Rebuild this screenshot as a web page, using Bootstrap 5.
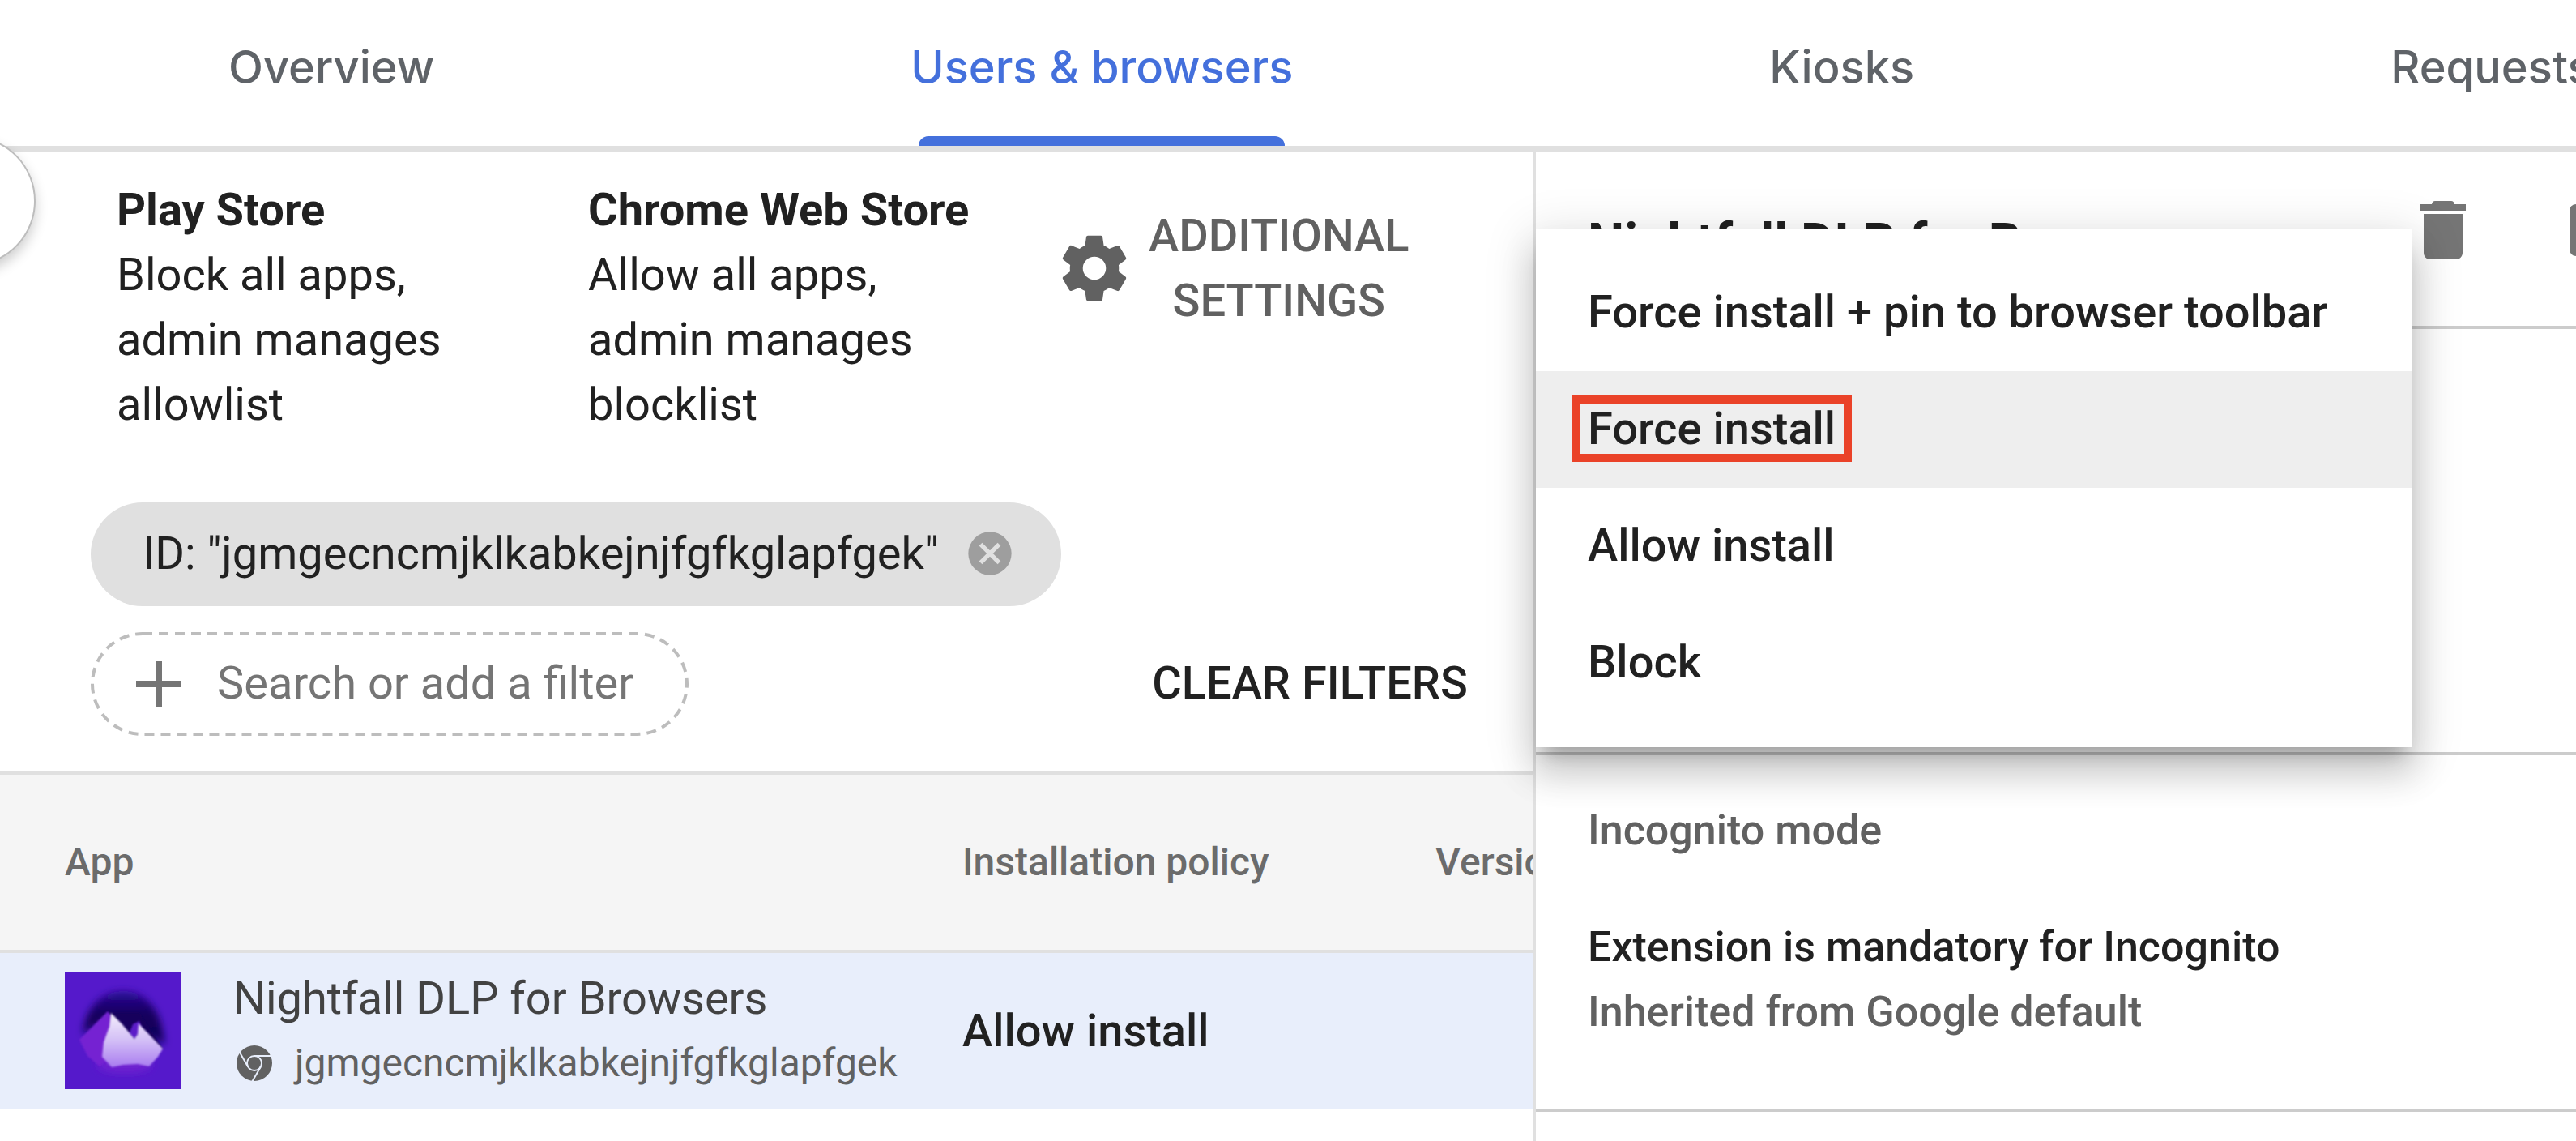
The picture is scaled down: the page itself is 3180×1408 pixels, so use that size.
<!DOCTYPE html>
<html lang="en">
<head>
<meta charset="utf-8">
<meta name="viewport" content="width=device-width, initial-scale=1">
<title>Apps &amp; extensions</title>
<link href="https://cdn.jsdelivr.net/npm/bootstrap@5.3.0/dist/css/bootstrap.min.css" rel="stylesheet">
<style>
  body { font-family: Roboto, "Liberation Sans", sans-serif; font-size: 56px; line-height: 80px; color: #212121; background: #fff; }
  .fw-mid { font-weight: 500; }
  .ink-soft { color: #616161; }
  svg { display: block; flex: none; }

  .tab-bar { padding-left: 282px; gap: 588px; border-bottom: 8px solid #e0e0e0; font-family: Inter, Roboto, sans-serif; }
  .tab-bar .nav-link { padding: 43px 0 0; color: #5f6368; font-weight: 500; white-space: nowrap; }
  .tab-bar .nav-link::after { content: ""; display: block; height: 12px; margin: 45px 10px 0; border-radius: 12px 12px 0 0; }
  .tab-bar .nav-link.active { color: #4470dc; }
  .tab-bar .nav-link.active::after { background: #4470dc; }

  .drawer-toggle { left: -116px; top: 168px; width: 160px; height: 160px; border: 2px solid #bdbdbd; border-radius: 50%; background: #fff; box-shadow: 0 8px 16px rgba(0,0,0,.2); z-index: 3; }

  .panes { display: grid; grid-template-columns: minmax(0,1896fr) minmax(0,1284fr); }
  .list-pane { border-right: 4px solid #e0e0e0; padding-top: 31px; }

  .plain-btn { border: 0; padding: 0; background: none; color: #212121; }
  .policies { padding-left: 144px; gap: 92px; }
  .policy { width: 490px; }
  .settings-btn { gap: 24px; width: min-content; margin-top: 32px; color: #616161; font-weight: 500; }

  .filters { padding: 81px 80px 44px 112px; gap: 32px; }
  .chip { height: 128px; padding: 0 56px 2px 64px; gap: 31px; background: #e0e0e0; }
  .filter-box { height: 128px; width: 738px; padding: 0 56px; gap: 44px; }
  .filter-box .outline { inset: 0; width: 100%; height: 100%; }
  .filter-box .outline rect { width: calc(100% - 4px); height: calc(100% - 4px); }
  .filter-box input { border: 0; padding: 0 0 2px; outline: 0; background: none; min-width: 0; color: #212121; }
  .filter-box input::placeholder { color: #757575; opacity: 1; }
  .clear-btn { padding-bottom: 2px; }

  .app-table { table-layout: fixed; width: 2356px; border-collapse: separate; border-spacing: 0; margin: 0; color: #212121; }
  .app-table > :not(caption) > * > * { padding: 0; border: 0; vertical-align: middle; }
  .app-table > thead > tr > th { height: 224px; border-top: 4px solid #e0e0e0; border-bottom: 4px solid #e0e0e0; background: #f5f5f5; color: #6b6b6b; font-size: 48px; font-weight: 500; }
  .app-table > tbody > tr > td { height: 192px; background: #e8eefb; }
  .app-table > * > tr > :first-child { padding-left: 80px; }
  .col-app { width: 1188px; }
  .col-policy { width: 584px; }
  .app-cell { gap: 64px; }
  .app-name { color: #424242; }
  .app-id { gap: 28px; padding-left: 4px; font-size: 48px; color: #616161; }

  .detail-head { height: 218px; padding: 60px 0 0 64px; border-bottom: 4px solid #ccc; }
  .detail-title { font-size: 64px; line-height: 104px; }
  .detail-head .actions { gap: 128px; margin-right: -56px; }
  .detail-policy { height: 526px; border-bottom: 4px solid #ccc; }
  .detail-mode { padding: 53px 64px 79px; border-bottom: 4px solid #ccc; font-size: 52px; font-weight: 500; }
  .mode-heading { font-size: 52px; line-height: 80px; margin-bottom: 64px; }

  .policy-menu { top: 94px; left: 0; width: 1082px; padding: 32px 0; border: 0; border-radius: 0; background: #fff; z-index: 2; font-size: 56px;
    box-shadow: 0 20px 20px -12px rgba(0,0,0,.2), 0 32px 40px 4px rgba(0,0,0,.14), 0 12px 56px 8px rgba(0,0,0,.12); }
  .policy-menu .dropdown-item { height: 144px; padding: 0 64px 2px; color: #212121; font-weight: 500; }
  .policy-menu .dropdown-item.current { background: #eee; }
  .callout-box { inset: -1px -20px -1px -20px; border: 10px solid #ea4228; }
</style>
</head>
<body>
<div class="d-flex flex-column min-vh-100 position-relative overflow-hidden">
  <nav class="nav flex-nowrap tab-bar" aria-label="Sections">
    <a class="nav-link" href="#">Overview</a>
    <a class="nav-link active" href="#" aria-current="page">Users &amp; browsers</a>
    <a class="nav-link" href="#">Kiosks</a>
    <a class="nav-link" href="#">Requests</a>
  </nav>
  <button type="button" class="drawer-toggle position-absolute" aria-label="Toggle panel"></button>

  <main class="panes flex-grow-1">
    <section class="list-pane overflow-hidden">
      <div class="d-flex align-items-start policies">
        <div class="policy"><strong>Play Store</strong><br>Block all apps, admin manages allowlist</div>
        <div class="policy"><strong>Chrome Web Store</strong><br>Allow all apps, admin manages blocklist</div>
        <button type="button" class="plain-btn settings-btn d-flex align-items-center">
          <svg width="86" height="84" viewBox="2 2 20 20" fill="#616161" aria-hidden="true"><path d="M19.14 12.94c.04-.3.06-.61.06-.94 0-.32-.02-.64-.07-.94l2.03-1.58c.18-.14.23-.41.12-.61l-1.92-3.32c-.12-.22-.37-.29-.59-.22l-2.39.96c-.5-.38-1.03-.7-1.62-.94l-.36-2.54c-.04-.24-.24-.41-.48-.41h-3.84c-.24 0-.43.17-.47.41l-.36 2.54c-.59.24-1.13.57-1.62.94l-2.39-.96c-.22-.08-.47 0-.59.22L2.74 8.87c-.12.21-.08.47.12.61l2.03 1.58c-.05.3-.09.63-.09.94s.02.64.07.94l-2.03 1.58c-.18.14-.23.41-.12.61l1.92 3.32c.12.22.37.29.59.22l2.39-.96c.5.38 1.03.7 1.62.94l.36 2.54c.05.24.24.41.48.41h3.84c.24 0 .44-.17.47-.41l.36-2.54c.59-.24 1.13-.56 1.62-.94l2.39.96c.22.08.47 0 .59-.22l1.92-3.32c.12-.22.07-.47-.12-.61l-2.01-1.58zM12 15.4a3.4 3.4 0 1 1 0-6.8 3.4 3.4 0 0 1 0 6.800z"/></svg>
          <span>ADDITIONAL SETTINGS</span>
        </button>
      </div>

      <div class="filters d-flex flex-column align-items-start">
        <div class="chip rounded-pill d-inline-flex align-items-center">
          <span>ID: "jgmgecncmjklkabkejnjfgfkglapfgek"</span>
          <button type="button" class="plain-btn" aria-label="Remove filter">
            <svg width="64" height="64" viewBox="0 0 24 24"><circle cx="12" cy="12" r="10" fill="#9e9e9e"/><path d="M7.700 7.700l8.600 8.600M16.300 7.700l-8.600 8.600" stroke="#e0e0e0" stroke-width="2"/></svg>
          </button>
        </div>
        <div class="d-flex align-items-center justify-content-between w-100">
          <label class="filter-box position-relative d-flex align-items-center">
            <svg class="outline position-absolute" aria-hidden="true"><rect x="2" y="2" rx="62" fill="none" stroke="#bdbdbd" stroke-width="4" stroke-dasharray="12 8"/></svg>
            <svg width="56" height="56" viewBox="0 0 56 56" stroke="#757575" stroke-width="8" aria-hidden="true"><path d="M28 0v56M0 28h56"/></svg>
            <input type="text" class="flex-grow-1" placeholder="Search or add a filter" aria-label="Search or add a filter">
          </label>
          <button type="button" class="plain-btn clear-btn fw-mid">CLEAR FILTERS</button>
        </div>
      </div>

      <table class="table app-table">
        <colgroup><col class="col-app"><col class="col-policy"><col></colgroup>
        <thead><tr><th scope="col">App</th><th scope="col">Installation policy</th><th scope="col">Version</th></tr></thead>
        <tbody>
          <tr>
            <td>
              <div class="app-cell d-flex align-items-center">
                <svg width="144" height="144" viewBox="0 0 144 144" role="img" aria-label="Nightfall">
                  <defs>
                    <filter id="soft" x="-30%" y="-30%" width="160%" height="160%"><feGaussianBlur stdDeviation="5"/></filter>
                    <filter id="edge"><feGaussianBlur stdDeviation="1"/></filter>
                    <linearGradient id="snow" x1="0" y1="0" x2="0" y2="1"><stop offset="0" stop-color="#f4effc"/><stop offset=".5" stop-color="#d3bff6"/><stop offset="1" stop-color="#a97cf0"/></linearGradient>
                    <linearGradient id="night" x1="0" y1="0" x2="0" y2="1"><stop offset="0" stop-color="#2a0a96"/><stop offset=".45" stop-color="#14005c"/><stop offset="1" stop-color="#0e0058"/></linearGradient>
                  </defs>
                  <rect width="144" height="144" fill="#5519cb"/>
                  <path d="M22 76C26 40 48 23 72 23s48 17 51 66L92 72 86 84 56 56z" fill="url(#night)" filter="url(#soft)"/>
                  <path d="M53 50L92 50 121 94 90 90 60 80z" fill="#14005c" filter="url(#edge)"/>
                  <ellipse cx="74" cy="114" rx="34" ry="10" fill="#6f20d0" filter="url(#soft)"/>
                  <path d="M18 83L53 48l6 8-8 54-8 6-15-13z" fill="#7522d2" filter="url(#edge)"/>
                  <path d="M84 64l8-4 3 10-8 14-8-8z" fill="#5c1cc8" filter="url(#edge)"/>
                  <path d="M57 50l13 13 16 19 4-6 1-13 30 31-6 10-11 12-14-3-18 1-14 3-12-13 2-18 7-19z" fill="url(#snow)" filter="url(#edge)"/>
                </svg>
                <div>
                  <div class="app-name">Nightfall DLP for Browsers</div>
                  <div class="app-id d-flex align-items-center">
                    <svg width="44" height="44" viewBox="0 0 44 44" aria-hidden="true"><circle cx="22" cy="22" r="22" fill="#616161"/><g stroke="#e8eefb" stroke-width="2" fill="none"><circle cx="22" cy="22" r="9"/><path d="M22 13h21"/><path d="M22 13h21" transform="rotate(120 22 22)"/><path d="M22 13h21" transform="rotate(240 22 22)"/></g></svg>
                    <span>jgmgecncmjklkabkejnjfgfkglapfgek</span>
                  </div>
                </div>
              </div>
            </td>
            <td class="fw-mid">Allow install</td>
            <td></td>
          </tr>
        </tbody>
      </table>
    </section>

    <aside class="position-relative">
      <header class="detail-head d-flex align-items-start">
        <span class="detail-title fw-bold text-nowrap">Nightfall DLP for Browsers</span>
        <div class="actions d-flex align-items-center ms-auto">
          <button type="button" class="plain-btn" aria-label="Delete"><svg width="56" height="72" viewBox="5 3 14 18" fill="#757575"><path d="M6 19c0 1.1.9 2 2 2h8c1.1 0 2-.9 2-2V7H6v12zM19 4h-3.500q-.2-1-1-1h-5q-.8 0-1 1H5v2h14V4z"/></svg></button>
          <button type="button" class="plain-btn" aria-label="More details"><svg width="64" height="64" viewBox="0 0 64 64"><rect width="64" height="64" rx="8" fill="#757575"/></svg></button>
        </div>
      </header>
      <section class="detail-policy"></section>
      <section class="detail-mode">
        <h2 class="mode-heading ink-soft fw-mid">Incognito mode</h2>
        <div>Extension is mandatory for Incognito</div>
        <div class="ink-soft">Inherited from Google default</div>
      </section>

      <div class="dropdown-menu policy-menu show" role="menu">
        <button type="button" class="dropdown-item" role="menuitem">Force install + pin to browser toolbar</button>
        <button type="button" class="dropdown-item current" role="menuitem"><span class="position-relative d-inline-block">Force install<span class="callout-box position-absolute"></span></span></button>
        <button type="button" class="dropdown-item" role="menuitem">Allow install</button>
        <button type="button" class="dropdown-item" role="menuitem">Block</button>
      </div>
    </aside>
  </main>
</div>
<script src="https://cdn.jsdelivr.net/npm/bootstrap@5.3.0/dist/js/bootstrap.bundle.min.js"></script>
</body>
</html>
